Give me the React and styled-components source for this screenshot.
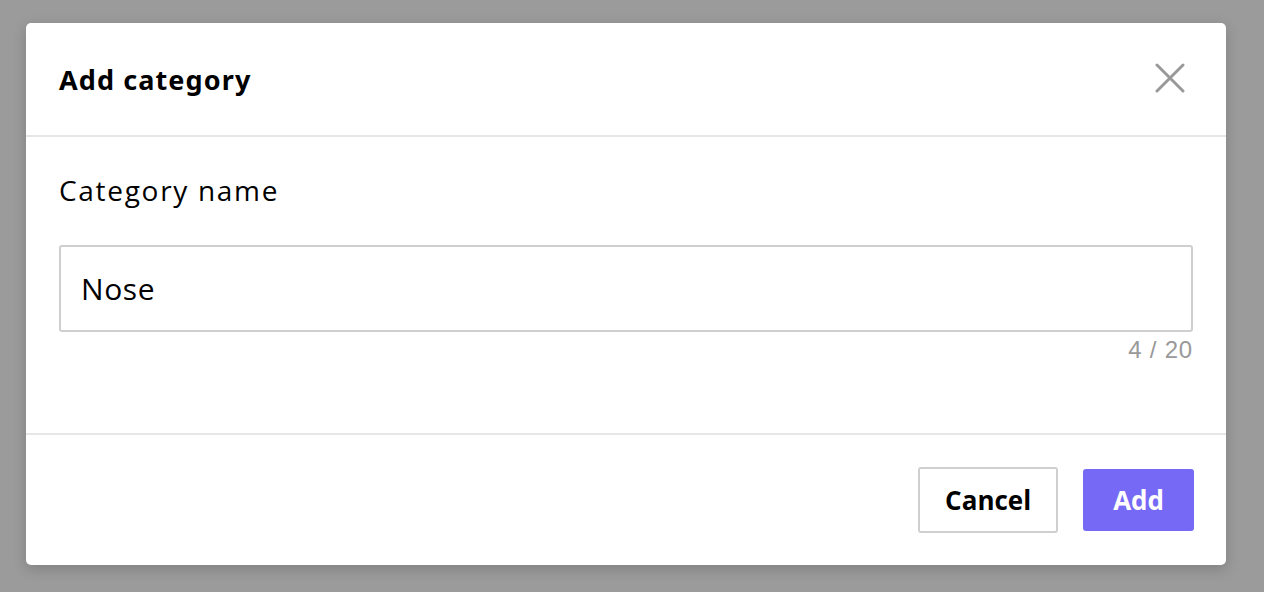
import React from "react";
import styled, { createGlobalStyle } from "styled-components";

const Global = createGlobalStyle`
  html, body {
    margin: 0;
    padding: 0;
    background: #9b9b9b;
  }
  body {
    font-family: "Open Sans", "Noto Sans", sans-serif;
  }
`;

function CloseIcon() {
  return (
    <svg width="30" height="30" viewBox="0 0 30 30">
      <path
        d="M2 2 L28 28 M28 2 L2 28"
        stroke="#999"
        strokeWidth="3"
        strokeLinecap="round"
        fill="none"
      />
    </svg>
  );
}

export default function App() {
  return (
    <>
      <Global />
      <Backdrop>
        <Dialog>
          <Header>
            <Title>Add category</Title>
            <CloseButton aria-label="Close">
              <CloseIcon />
            </CloseButton>
          </Header>
          <Body>
            <Label htmlFor="cat">Category name</Label>
            <Input id="cat" defaultValue="Nose" />
            <Counter>4 / 20</Counter>
          </Body>
          <Footer>
            <Button>Cancel</Button>
            <Button primary>Add</Button>
          </Footer>
        </Dialog>
      </Backdrop>
    </>
  );
}

const Backdrop = styled.div`
  height: 592px;
  padding: 23px 38px 0 26px;
  box-sizing: border-box;
`;

const Dialog = styled.div`
  width: 1200px;
  height: 542px;
  background: #fff;
  border-radius: 5px;
  box-shadow: 0 4px 14px rgba(0, 0, 0, 0.18);
  display: flex;
  flex-direction: column;
`;

const Header = styled.div`
  height: 112px;
  flex-shrink: 0;
  border-bottom: 2px solid #e6e6e6;
  display: flex;
  align-items: center;
  justify-content: space-between;
  padding: 0 41px 0 33px;
`;

const Title = styled.h2`
  margin: 0;
  font-family: "Noto Sans", sans-serif;
  font-weight: 700;
  font-size: 27px;
  color: #000;
  letter-spacing: 1.1px;
`;

const CloseButton = styled.button`
  background: transparent;
  border: 0;
  padding: 0;
  display: flex;
  margin-top: -3px;
  cursor: pointer;
`;

const Body = styled.div`
  height: 298px;
  flex-shrink: 0;
  border-bottom: 2px solid #e6e6e6;
  padding: 35px 33px 0;
  box-sizing: border-box;
  display: flex;
  flex-direction: column;
`;

const Label = styled.label`
  font-size: 28px;
  letter-spacing: 1.7px;
  color: #000;
  line-height: 36px;
  margin-bottom: 37px;
`;

const Input = styled.input`
  height: 87px;
  box-sizing: border-box;
  border: 2px solid #cfcfcf;
  border-radius: 3px;
  padding: 0 20px;
  font-family: "Open Sans", sans-serif;
  font-size: 30px;
  letter-spacing: 0.6px;
  color: #000;
  outline: none;
`;

const Counter = styled.div`
  align-self: flex-end;
  margin-top: 4px;
  font-family: "Liberation Sans", Arial, sans-serif;
  font-size: 24px;
  letter-spacing: 0.8px;
  color: #999;
`;

const Footer = styled.div`
  flex: 1;
  display: flex;
  align-items: center;
  justify-content: flex-end;
  gap: 25px;
  padding: 0 32px 0 0;
`;

const Button = styled.button`
  height: ${(p) => (p.primary ? "62px" : "66px")};
  padding: 0 ${(p) => (p.primary ? "30px" : "25px")};
  border: ${(p) => (p.primary ? "0" : "2px solid #cfcfcf")};
  border-radius: 3px;
  background: ${(p) => (p.primary ? "#7669f5" : "#fff")};
  color: ${(p) => (p.primary ? "#fff" : "#000")};
  font-family: "Open Sans", sans-serif;
  font-weight: 700;
  font-size: 26px;
  cursor: pointer;
`;
